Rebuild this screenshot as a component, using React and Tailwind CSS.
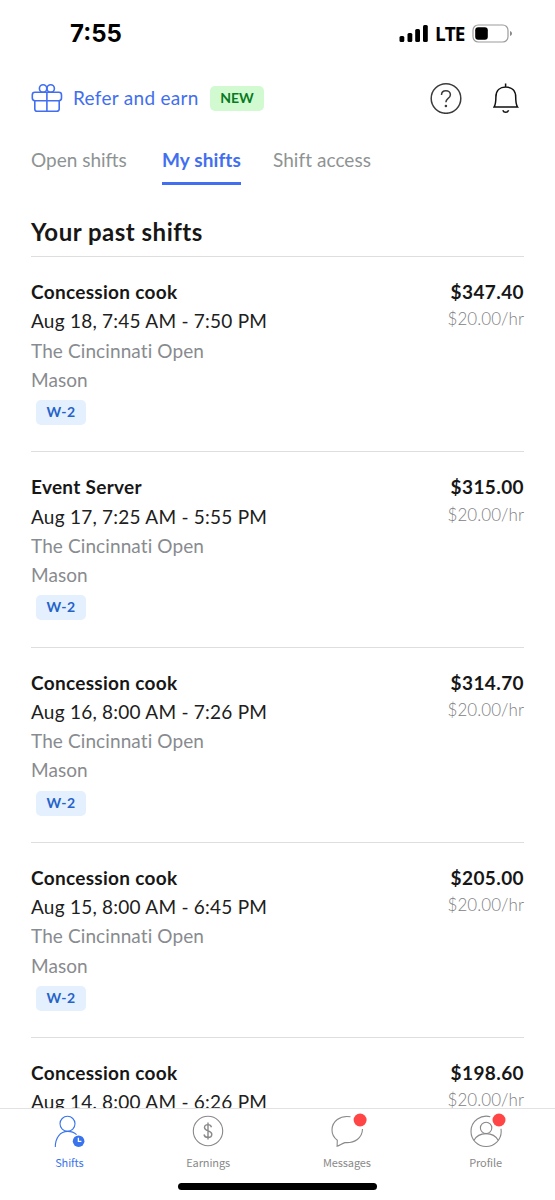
import React from "react";

const shifts = [
  { role: "Concession cook", time: "Aug 18, 7:45 AM - 7:50 PM", pay: "$347.40" },
  { role: "Event Server", time: "Aug 17, 7:25 AM - 5:55 PM", pay: "$315.00" },
  { role: "Concession cook", time: "Aug 16, 8:00 AM - 7:26 PM", pay: "$314.70" },
  { role: "Concession cook", time: "Aug 15, 8:00 AM - 6:45 PM", pay: "$205.00" },
  { role: "Concession cook", time: "Aug 14, 8:00 AM - 6:26 PM", pay: "$198.60" },
];

const StatusBar = () => {
  return (
    <div className="h-[66px] shrink-0 flex items-center justify-between pt-[2px] pl-[70px] pr-[42px] text-black">
      <div className="font-['Inter',sans-serif] text-[24px] font-bold leading-none">7:55</div>
      <div className="flex items-center">
        <svg className="w-[30px] h-[20px]" viewBox="0 0 30 20" fill="currentColor">
          <rect x="0.5" y="12" width="4.8" height="6" rx="1.5" />
          <rect x="8.5" y="9" width="4.8" height="9" rx="1.5" />
          <rect x="16.2" y="5" width="4.8" height="13" rx="1.5" />
          <rect x="24" y="1" width="4.8" height="17" rx="1.5" />
        </svg>
        <div className="ml-[6px] w-[30px] font-['Open_Sans',sans-serif] text-[19px] font-bold leading-none tracking-[-1px]">LTE</div>
        <svg className="ml-[7px] w-[41px] h-[20px]" viewBox="0 0 41 20" fill="none">
          <rect x="1" y="1" width="35" height="17" rx="5.2" stroke="#9b9b9b" strokeWidth="1.2" />
          <rect x="3.2" y="3.2" width="12.6" height="12.6" rx="3" fill="#000" />
          <path d="M38 7v5c1.3-.5 2-1.3 2-2.500S39.300 7.500 38 7z" fill="#8b8b8b" />
        </svg>
      </div>
    </div>
  );
};

const TopBar = () => {
  return (
    <div className="h-[64px] shrink-0 flex items-center justify-between pl-[31px] pr-[36px]">
      <div className="flex items-center text-[#426ef0]">
        <svg className="w-[32px] h-[30px]" viewBox="0 0 32 30" fill="none" stroke="currentColor" strokeWidth="1.6">
          <rect x="1.3" y="9.3" width="29.2" height="8.400" rx="2.600" />
          <path d="M3.800 17.700v8.300a2.300 2.300 0 0 0 2.300 2.300h19.800a2.300 2.300 0 0 0 2.300-2.300v-8.300M15.900 9v19.300" />
          <circle cx="12.100" cy="5.500" r="3.700" />
          <circle cx="19.700" cy="5.500" r="3.700" />
        </svg>
        <div className="ml-[10px] w-[126px] text-[19px] leading-6 tracking-[0.3px] whitespace-nowrap">Refer and earn</div>
        <div className="ml-[11px] w-[54px] h-[25px] rounded-[5px] bg-[#d2fad0] text-[#087a22] text-[14px] font-bold leading-[24px] text-center">
          NEW
        </div>
      </div>
      <div className="flex items-center">
        <svg className="w-[32px] h-[32px]" viewBox="0 0 32 32" fill="none" stroke="#3c3c3c" strokeWidth="1.5">
          <circle cx="16" cy="16.500" r="14.800" />
          <path d="M11.500 13c0-2.600 1.900-4.300 4.400-4.300s4.500 1.700 4.500 4.100c0 2-1.200 2.900-2.500 3.800-1.300 1-2 1.700-2 3.600" />
          <circle cx="15.900" cy="24" r="1.300" fill="#3c3c3c" stroke="none" />
        </svg>
        <svg className="ml-[31px] w-[26px] h-[32px]" viewBox="0 0 26 32" fill="none" stroke="#111" strokeWidth="1.500">
          <path d="M12.600 1.500v3M1 25.100h23.600c-1.700-2.500-1.900-4.600-1.900-10.100C22.700 8.500 18.600 5 12.800 5S2.900 8.500 2.900 15c0 5.500-.2 7.600-1.900 10.100z" />
          <path d="M9.800 28.200c.5 1.400 1.500 2.100 2.900 2.100s2.400-.7 2.900-2.100" />
        </svg>
      </div>
    </div>
  );
};

const Tabs = () => {
  return (
    <div className="h-[55px] shrink-0 flex items-start pt-[15px] pl-[31px] text-[19px] leading-[29px] text-[#8e9393] whitespace-nowrap">
      <div className="w-[96px]">Open shifts</div>
      <div className="ml-[35px] w-[79px] h-[40px] border-b-[3px] border-[#426ef0] text-[#426ef0] font-bold tracking-[0.1px]">My shifts</div>
      <div className="ml-[32px] tracking-[0.05px]">Shift access</div>
    </div>
  );
};

const ShiftRow = ({ shift }) => {
  return (
    <div className="h-[195.25px] shrink-0 border-b border-[#dedede] pt-[20px] flex justify-between whitespace-nowrap">
      <div className="text-[19px] leading-[29.300px] text-[#888b8f]">
        <div className="font-bold text-[#171717] tracking-[0.3px]">{shift.role}</div>
        <div className="text-[#202020] tracking-[0.24px]">{shift.time}</div>
        <div className="tracking-[0.1px]">The Cincinnati Open</div>
        <div className="tracking-[0.05px]">Mason</div>
        <div className="mt-[6px] ml-[5px] w-[50px] h-[25px] rounded-[5px] bg-[#e4f0fe] text-[#2563c9] text-[14px] font-bold leading-[24px] tracking-[0.4px] text-center">
          W-2
        </div>
      </div>
      <div className="text-right">
        <div className="text-[19px] leading-[29.300px] font-bold text-[#171717] tracking-[0.4px]">{shift.pay}</div>
        <div className="text-[17px] leading-[25px] font-light text-[#7f8184] tracking-[0.05px]">$20.00/hr</div>
      </div>
    </div>
  );
};

const NavItem = ({ label, active, children }) => {
  return (
    <div className={active ? "flex-1 flex flex-col items-center text-[#3974ec]" : "flex-1 flex flex-col items-center text-[#898989]"}>
      <svg className="mt-[3px] w-[38px] h-[38px] overflow-visible" viewBox="0 0 38 38" fill="none" stroke="currentColor" strokeWidth="1.100">
        {children}
      </svg>
      <div className="mt-[3px] font-['Noto_Sans_CJK_SC',sans-serif] text-[11px] leading-[18px] tracking-[-0.1px]">{label}</div>
    </div>
  );
};

const BottomNav = () => {
  return (
    <div className="h-[92px] shrink-0 border-t border-[#e2e2e2] bg-white flex flex-col">
      <div className="flex">
        <NavItem label="Shifts" active>
          <circle cx="17.500" cy="11.800" r="7.500" />
          <path d="M5.300 35C5.300 26 10 19.400 17.800 19.400c3.600 0 6.400 1 8.800 3.200" />
          <circle cx="28.600" cy="29.200" r="5.800" fill="currentColor" stroke="none" />
          <path d="M28.400 25.800v3.600h3" stroke="#fff" strokeWidth="1.300" />
        </NavItem>
        <NavItem label="Earnings">
          <circle cx="19" cy="19" r="14.700" />
          <path d="M22.500 15.200c-.5-1.700-1.700-2.600-3.500-2.600-2.100 0-3.500 1.100-3.500 3 0 4.300 7.300 2.300 7.300 6.700 0 2-1.500 3.200-3.800 3.200-2.200 0-3.600-1-4-3M19 10.500v17" strokeWidth="1.400" />
        </NavItem>
        <NavItem label="Messages">
          <path d="M22.500 4.800C12 3 4 9.500 4 18c0 4.300 1.900 7.700 5.300 10.200l-.2 6.100c2.800-.9 5-3 7.800-3.700 9.800.7 17.400-4.500 17.600-13.500" />
          <circle cx="32.100" cy="8" r="6.500" fill="#ff4545" stroke="none" />
        </NavItem>
        <NavItem label="Profile">
          <path d="M23.300 4.700C14.500 2.200 4 8.500 4 19.500c0 8.300 6.700 15 15.100 15s15.100-6.700 15.100-15l-.2-2.700" />
          <circle cx="19.100" cy="15.900" r="5.700" />
          <path d="M6.900 28.400c2.300-4.300 6.900-6.800 12.200-6.800s9.900 2.500 12.200 6.800" />
          <circle cx="32" cy="8" r="6.500" fill="#ff4545" stroke="none" />
        </NavItem>
      </div>
      <div className="mt-[12px] mx-auto w-[199px] h-[7px] rounded-full bg-black"></div>
    </div>
  );
};

export default function App() {
  return (
    <div className="w-[555px] h-[1200px] overflow-hidden bg-white flex flex-col font-['Lato',sans-serif]">
      <StatusBar />
      <TopBar />
      <Tabs />
      <div className="flex-1 min-h-0 overflow-hidden flex flex-col px-[31px]">
        <div className="h-[72px] shrink-0 pt-[31px] border-b border-[#dedede] text-[24px] leading-[32px] font-bold tracking-[0.5px] text-[#171717]">
          Your past shifts
        </div>
        {shifts.map((shift) => (
          <ShiftRow key={shift.time} shift={shift} />
        ))}
      </div>
      <BottomNav />
    </div>
  );
}
